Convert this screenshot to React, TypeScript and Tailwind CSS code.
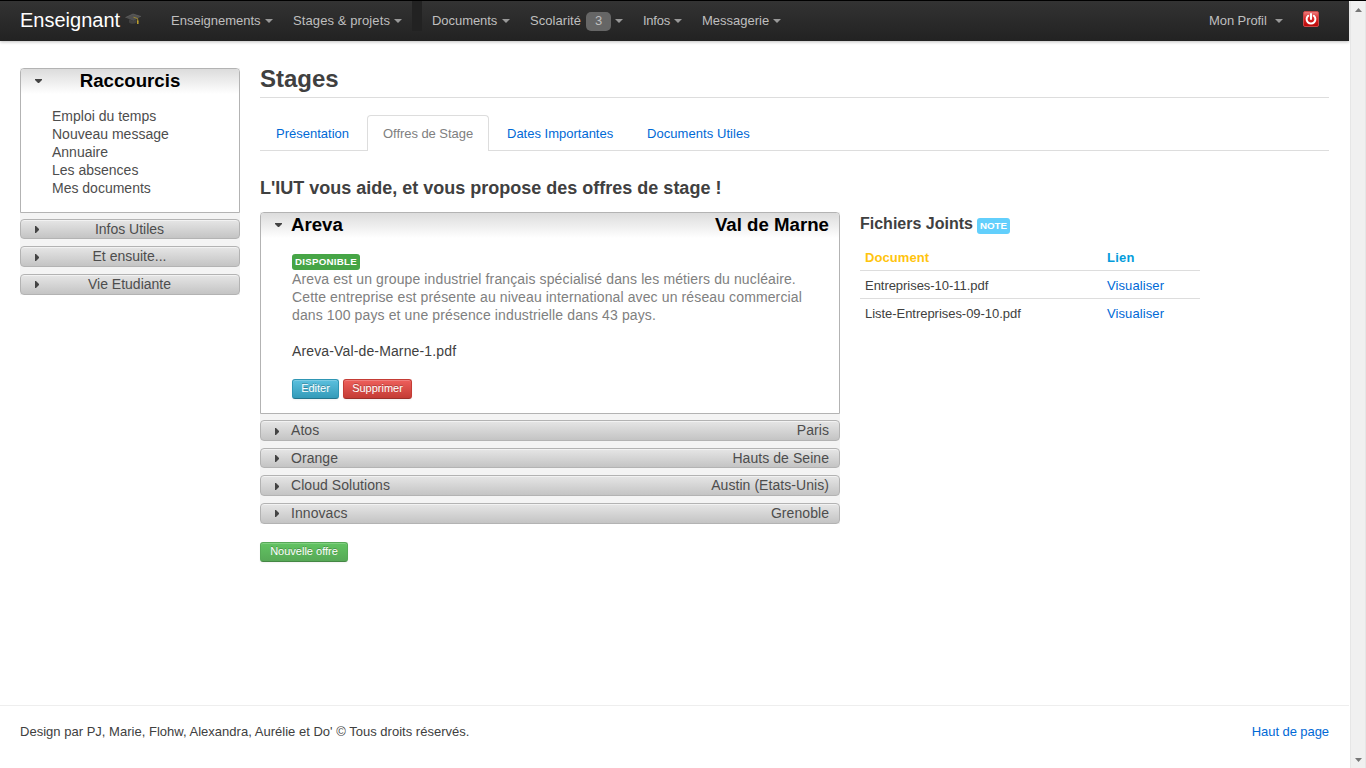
import type { ReactNode } from "react";

function Caret() {
  return <i className="block h-0 w-0 border-x-4 border-t-4 border-x-transparent border-t-[#999999]" />;
}

function NavItem({
  width,
  text,
  textWidth,
  badge,
  tracking = "",
}: {
  width: string;
  text: string;
  textWidth: string;
  badge?: string;
  tracking?: string;
}) {
  return (
    <a className={`flex h-10 shrink-0 items-center ${width}`}>
      <span className={`shrink-0 whitespace-nowrap leading-[18px] ${textWidth} ${tracking}`}>{text}</span>
      {badge && (
        <span className="mr-1 flex h-[19px] w-[25px] shrink-0 items-center justify-center rounded-[5px] bg-[#666666] leading-[18px]">
          {badge}
        </span>
      )}
      <Caret />
    </a>
  );
}

function GradCap() {
  return (
    <svg width="17" height="13" viewBox="0 0 17 13" className="mb-[3px] shrink-0">
      <path d="M0.500 4.500 8 1l8 2.500L8.500 8z" fill="#505050" />
      <path d="M4 6.200v3.300c1.500 1.500 5 1.800 7.500.3V6.300L8.500 8z" fill="#414141" />
      <path d="M0.500 4.500 8 1l8 2.500" fill="none" stroke="#6a6a6a" strokeWidth=".6" />
      <path d="M8.500 4.200 12.700 5.600V9" fill="none" stroke="#a48c2c" strokeWidth=".9" />
      <path d="M12.100 7.500h1.400v3.500h-1.400z" fill="#c9a92f" />
    </svg>
  );
}

function PowerIcon() {
  return (
    <svg width="16" height="16" viewBox="0 0 16 16" className="shrink-0">
      <defs>
        <linearGradient id="red" x1="0" y1="0" x2="0" y2="1">
          <stop offset="0" stopColor="#ee8080" />
          <stop offset=".5" stopColor="#d92424" />
          <stop offset="1" stopColor="#b80505" />
        </linearGradient>
      </defs>
      <rect x=".5" y=".5" width="15" height="15" rx="1.500" fill="url(#red)" stroke="#c84848" />
      <path d="M5.200 4.800a4.400 4.400 0 1 0 5.600 0M8 3v5" fill="none" stroke="#fff" strokeWidth="2" strokeLinecap="round" />
    </svg>
  );
}

function BarHeader({
  height,
  arrowTop,
  left,
  right,
  center,
}: {
  height: string;
  arrowTop: string;
  left?: string;
  right?: string;
  center?: string;
}) {
  return (
    <div
      className={`flex w-full items-start rounded-[4px] border border-[#b3b3b3] bg-gradient-to-b from-[#e6e6e6] to-[#c4c4c4] shadow-[inset_0_1px_0_#f2f2f2] ${height}`}
    >
      <svg width="4" height="7" viewBox="0 0 4 7" className={`ml-[14px] shrink-0 ${arrowTop}`}>
        <path d="M0 0h1l3 3v1L1 7H0z" fill="#444" />
      </svg>
      {center ? (
        <span className="-ml-[19px] flex-1 text-center leading-[18px]">{center}</span>
      ) : (
        <>
          <span className="ml-3 leading-[18px] tracking-[0.06px]">{left}</span>
          <span className="ml-auto mr-[10px] leading-[18px] tracking-[0.06px]">{right}</span>
        </>
      )}
    </div>
  );
}

function OpenPanel({ height, header, children }: { height: string; header: ReactNode; children: ReactNode }) {
  return (
    <div className={`rounded-t-[4px] border border-[#b3b3b3] bg-white ${height}`}>
      <div className="flex h-[25px] items-center rounded-t-[3px] bg-gradient-to-b from-[#dcdcdc] to-white pb-[2px] text-[18.67px] font-bold text-black">
        <svg width="7" height="4" viewBox="0 0 7 4" className="ml-[14px] shrink-0">
          <path d="M0 0h7v1L4 4H3L0 1z" fill="#444" />
        </svg>
        {header}
      </div>
      {children}
    </div>
  );
}

function SmallButton({ width, colors, children }: { width: string; colors: string; children: ReactNode }) {
  return (
    <button
      className={`flex h-5 items-start justify-center rounded-[3px] border text-[11px] leading-4 text-white shadow-[inset_0_1px_0_rgba(255,255,255,0.2),0_1px_2px_rgba(0,0,0,0.05)] [text-shadow:0_-1px_0_rgba(0,0,0,0.25)] ${width} ${colors}`}
    >
      {children}
    </button>
  );
}

const shortcuts = ["Emploi du temps", "Nouveau message", "Annuaire", "Les absences", "Mes documents"];
const files = ["Entreprises-10-11.pdf", "Liste-Entreprises-09-10.pdf"];

export default function App() {
  return (
    <div className="flex h-[768px] w-[1366px] flex-col overflow-hidden border-t border-black bg-white font-['Liberation_Sans',Arial,sans-serif] text-[13px] leading-[18px] text-[#404040]">
      <div className="flex flex-1">
        <div className="flex w-[1349px] flex-col">
          <nav className="flex h-10 shrink-0 items-center bg-gradient-to-b from-[#333333] to-[#222222] pl-5 text-[#bfbfbf] shadow-[0_1px_3px_rgba(0,0,0,0.25)]">
            <div className="flex w-[151px] items-center">
              <span className="mb-[3px] w-[105px] text-[20px] leading-5 text-white">Enseignant</span>
              <GradCap />
            </div>
            <NavItem width="w-[122px]" text="Enseignements" textWidth="w-[94px]" />
            <NavItem width="w-[119px]" text="Stages & projets" textWidth="w-[101px]" tracking="tracking-[0.1px]" />
            <i className="mb-[10px] mr-[10px] h-[30px] w-[10px] shrink-0 bg-[#222222]" />
            <NavItem width="w-[98px]" text="Documents" textWidth="w-[70px]" tracking="tracking-[-0.05px]" />
            <NavItem width="w-[113px]" text="Scolarité" textWidth="w-[56px]" badge="3" tracking="tracking-[0.05px]" />
            <NavItem width="w-[59px]" text="Infos" textWidth="w-[31px]" tracking="tracking-[-0.25px]" />
            <NavItem width="w-[100px]" text="Messagerie" textWidth="w-[71px]" />
            <div className="ml-auto flex items-center">
              <NavItem width="w-[94px]" text="Mon Profil" textWidth="w-[66px]" tracking="tracking-[-0.08px]" />
              <div className="mb-1 mr-[30px]">
                <PowerIcon />
              </div>
            </div>
          </nav>

          <div className="flex flex-1 pl-5 pr-5">
            <aside className="mt-[27px] flex h-[227px] w-[220px] shrink-0 flex-col bg-[#f4f4f4] text-[14px] text-[#4d4d4d]">
              <OpenPanel height="h-[145px]" header={<span className="-ml-[21px] flex-1 text-center">Raccourcis</span>}>
                <ul className="ml-[31px] mt-[13px]">
                  {shortcuts.map((s) => (
                    <li key={s}>{s}</li>
                  ))}
                </ul>
              </OpenPanel>
              <div className="mt-[6px] flex flex-col gap-[7px]">
                <BarHeader height="h-5" arrowTop="mt-[6px]" center="Infos Utiles" />
                <BarHeader height="h-[21px]" arrowTop="mt-[7px]" center="Et ensuite..." />
                <BarHeader height="h-[21px]" arrowTop="mt-[6px]" center="Vie Etudiante" />
              </div>
            </aside>

            <main className="ml-5 flex-1">
              <h1 className="mt-5 h-9 text-[24px] font-bold leading-9">Stages</h1>
              <div className="border-b border-[#dddddd]" />
              <div className="mt-[17px] flex h-9 border-b border-[#dddddd] text-[#0069d6]">
                <a className="w-[107px] pl-4 pt-[10px]">Présentation</a>
                <a className="h-9 w-[122px] rounded-t-[4px] border border-b-0 border-[#dddddd] bg-white pl-[15px] pt-[9px] tracking-[-0.05px] text-[#808080]">
                  Offres de Stage
                </a>
                <a className="w-[140px] pl-[18px] pt-[10px]">Dates Importantes</a>
                <a className="pl-[18px] pt-[10px] tracking-[0.06px]">Documents Utiles</a>
              </div>
              <h2 className="mt-[19px] h-[35px] text-[18px] font-bold leading-9">
                L'IUT vous aide, et vous propose des offres de stage !
              </h2>

              <div className="mt-[7px] flex">
                <section className="w-[580px]">
                  <div className="flex h-[312px] flex-col bg-[#f4f4f4] text-[14px] text-[#4d4d4d]">
                    <OpenPanel
                      height="h-[202px]"
                      header={
                        <>
                          <span className="ml-[9px]">Areva</span>
                          <span className="ml-auto mr-[10px]">Val de Marne</span>
                        </>
                      }
                    >
                      <div className="ml-[31px] mt-[14px]">
                        <div className="flex h-[18px] items-center">
                          <span className="mt-[2px] flex h-4 w-[68px] items-center justify-center rounded-[3px] bg-[#46a546] text-[9.75px] font-bold tracking-[0.25px] text-white">
                            DISPONIBLE
                          </span>
                        </div>
                        <p className="w-[530px] tracking-[0.12px] text-[#808080]">
                          Areva est un groupe industriel français spécialisé dans les métiers du nucléaire.
                          <br />
                          Cette entreprise est présente au niveau international avec un réseau commercial
                          <br />
                          dans 100 pays et une présence industrielle dans 43 pays.
                        </p>
                        <p className="mt-[18px] tracking-[0.14px] text-[#404040]">Areva-Val-de-Marne-1.pdf</p>
                        <div className="mt-[19px] flex gap-1">
                          <SmallButton
                            width="w-[47px]"
                            colors="border-[#2f96b4] border-b-[#24748c] bg-gradient-to-b from-[#5bc0de] to-[#339bb9]"
                          >
                            Editer
                          </SmallButton>
                          <SmallButton
                            width="w-[69px]"
                            colors="border-[#c43c35] border-b-[#9c302a] bg-gradient-to-b from-[#ee5f5b] to-[#c43c35]"
                          >
                            Supprimer
                          </SmallButton>
                        </div>
                      </div>
                    </OpenPanel>
                    <div className="mt-[6px] flex flex-col gap-[7px]">
                      <BarHeader height="h-[21px]" arrowTop="mt-[7px]" left="Atos" right="Paris" />
                      <BarHeader height="h-5" arrowTop="mt-[6px]" left="Orange" right="Hauts de Seine" />
                      <BarHeader height="h-[21px]" arrowTop="mt-[7px]" left="Cloud Solutions" right="Austin (Etats-Unis)" />
                      <BarHeader height="h-[21px]" arrowTop="mt-[6px]" left="Innovacs" right="Grenoble" />
                    </div>
                  </div>
                  <div className="mt-[18px]">
                    <SmallButton
                      width="w-[88px]"
                      colors="border-[#57a957] border-b-[#458745] bg-gradient-to-b from-[#62c462] to-[#57a957]"
                    >
                      Nouvelle offre
                    </SmallButton>
                  </div>
                </section>

                <section className="ml-5 w-[340px]">
                  <h3 className="flex h-6 items-center text-[16px] font-bold">
                    Fichiers Joints
                    <span className="ml-1 mt-1 flex h-4 w-[33px] items-center justify-center rounded-[3px] bg-[#62cffc] text-[9.75px] text-white">
                      NOTE
                    </span>
                  </h3>
                  <div className="mt-2 flex h-[27px] border-b border-[#dddddd] pl-[5px] pt-[5px] font-bold">
                    <span className="w-[242px] tracking-[0.08px] text-[#ffc40d]">Document</span>
                    <span className="tracking-[0.2px] text-[#049cdb]">Lien</span>
                  </div>
                  {files.map((f) => (
                    <div key={f} className="flex h-7 border-b border-[#dddddd] pl-[5px] pt-[6px] last:border-b-0">
                      <span className="w-[242px] tracking-[-0.04px]">{f}</span>
                      <a className="tracking-[0.1px] text-[#0069d6]">Visualiser</a>
                    </div>
                  ))}
                </section>
              </div>
            </main>
          </div>

          <footer className="flex h-[63px] shrink-0 justify-between border-t border-[#eeeeee] px-5 pt-[17px]">
            <span className="tracking-[0.015px]">
              Design par PJ, Marie, Flohw, Alexandra, Aurélie et Do' © Tous droits réservés.
            </span>
            <a className="tracking-[-0.07px] text-[#0069d6]">Haut de page</a>
          </footer>
        </div>

        <div className="ml-px flex w-4 flex-col items-center justify-between border-x border-[#e6e6e6] bg-[#f0f0f0] pb-[6px] pt-[7px]">
          <svg width="7" height="4" viewBox="0 0 7 4">
            <path d="M3.500 0 7 4H0z" fill="#777" />
          </svg>
          <svg width="7" height="4" viewBox="0 0 7 4">
            <path d="M3.500 4 7 0H0z" fill="#777" />
          </svg>
        </div>
      </div>
    </div>
  );
}
